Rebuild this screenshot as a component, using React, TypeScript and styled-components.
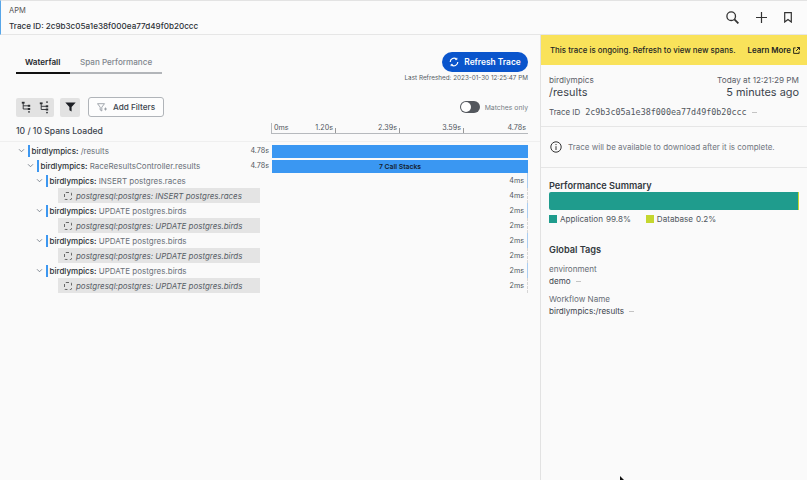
import React from 'react'
import styled, { createGlobalStyle } from 'styled-components'

const GlobalStyle = createGlobalStyle`
  html, body {
    margin: 0;
    padding: 0;
    background: #fafafa;
  }
  body {
    font-family: Inter, "Noto Sans", "Liberation Sans", sans-serif;
    color: #3c444d;
  }
`

type Span = { service: string; op: string; depth: number; time: string; db?: boolean }

const spans: Span[] = [
  { service: 'birdlympics:', op: 'INSERT postgres.races', depth: 2, time: '4ms' },
  { service: 'postgresql:postgres:', op: 'INSERT postgres.races', depth: 3, time: '4ms', db: true },
  { service: 'birdlympics:', op: 'UPDATE postgres.birds', depth: 2, time: '2ms' },
  { service: 'postgresql:postgres:', op: 'UPDATE postgres.birds', depth: 3, time: '2ms', db: true },
  { service: 'birdlympics:', op: 'UPDATE postgres.birds', depth: 2, time: '2ms' },
  { service: 'postgresql:postgres:', op: 'UPDATE postgres.birds', depth: 3, time: '2ms', db: true },
  { service: 'birdlympics:', op: 'UPDATE postgres.birds', depth: 2, time: '2ms' },
  { service: 'postgresql:postgres:', op: 'UPDATE postgres.birds', depth: 3, time: '2ms', db: true },
]

const Chevron = () => (
  <ChevronIcon viewBox="0 0 8 6">
    <path d="M1 1.5 L4 4.5 L7 1.5" fill="none" stroke="#6b7480" strokeWidth="1" />
  </ChevronIcon>
)

const SpanLabel = ({ depth, service, op }: { depth: number; service: string; op: string }) => (
  <LabelCell $depth={depth}>
    <Chevron />
    <BlueTick />
    <Name>
      <strong>{service}</strong> {op}
    </Name>
  </LabelCell>
)

const App = () => {
  return (
    <Page>
      <GlobalStyle />
      <Header>
        <HeaderText>
          <Crumb>APM</Crumb>
          <TraceTitle>Trace ID: 2c9b3c05a1e38f000ea77d49f0b20ccc</TraceTitle>
        </HeaderText>
        <HeaderIcons>
          <svg width="13" height="13" viewBox="0 0 13 13" fill="none" stroke="#333" strokeWidth="1.3">
            <circle cx="5.2" cy="5.2" r="4.3" />
            <path d="M8.4 8.4 L12.4 12.4" strokeWidth="1.8" />
          </svg>
          <svg width="11" height="11" viewBox="0 0 11 11" fill="none" stroke="#333" strokeWidth="1.2">
            <path d="M5.5 0 V11 M0 5.5 H11" />
          </svg>
          <svg width="8" height="11" viewBox="0 0 8 11" fill="none" stroke="#333" strokeWidth="1.2">
            <path d="M0.7 0.7 H7.3 V10 L4 7.5 L0.7 10 Z" />
          </svg>
        </HeaderIcons>
      </Header>

      <Main>
        <LeftPane>
          <TopRow>
            <Tabs>
              <Tab $active>Waterfall</Tab>
              <Tab>Span Performance</Tab>
            </Tabs>
            <RefreshBlock>
              <RefreshButton>
                <svg width="10" height="10" viewBox="0 0 10 10" fill="none" stroke="#fff" strokeWidth="1.2">
                  <path d="M1.2 5 A3.8 3.8 0 0 1 7.6 2.2 M8.8 5 A3.8 3.8 0 0 1 2.4 7.8" />
                  <path d="M7.9 0.8 V2.6 H6.2 M2.1 9.2 V7.4 H3.8" strokeWidth="0.9" />
                </svg>
                Refresh Trace
              </RefreshButton>
              <LastRefreshed>Last Refreshed: 2023-01-30 12:25:47 PM</LastRefreshed>
            </RefreshBlock>
          </TopRow>

          <Toolbar>
            <IconGroup>
              <svg width="10" height="12" viewBox="0 0 10 12" fill="none" stroke="#2a2d31" strokeWidth="0.9">
                <path d="M2.2 2 V8 H7 M2.2 4.8 H7" />
                <rect x="0.8" y="0.8" width="2.8" height="1.8" fill="#2a2d31" stroke="none" />
                <rect x="6.8" y="3.8" width="2.4" height="2" fill="#2a2d31" stroke="none" />
                <rect x="6.8" y="7" width="2.4" height="2" fill="#2a2d31" stroke="none" />
                <rect x="7.2" y="10.2" width="1.6" height="1.4" fill="#2a2d31" stroke="none" />
              </svg>
              <svg width="10" height="13" viewBox="0 0 10 13" fill="none" stroke="#2a2d31" strokeWidth="0.9">
                <path d="M2.2 2.5 V8.5 H7 M2.2 5.3 H7" />
                <rect x="7.2" y="0.4" width="1.6" height="1.4" fill="#2a2d31" stroke="none" />
                <rect x="0.8" y="1.4" width="2.8" height="1.8" fill="#2a2d31" stroke="none" />
                <rect x="6.8" y="4.3" width="2.4" height="2" fill="#2a2d31" stroke="none" />
                <rect x="6.8" y="7.5" width="2.4" height="2" fill="#2a2d31" stroke="none" />
                <rect x="7.2" y="10.9" width="1.6" height="1.4" fill="#2a2d31" stroke="none" />
              </svg>
            </IconGroup>
            <FilterIconBox>
              <svg width="11" height="10" viewBox="0 0 11 10">
                <path d="M0.3 0.5 H10.7 L6.6 5 V9.5 L4.4 8.2 V5 Z" fill="#1c1f24" />
              </svg>
            </FilterIconBox>
            <AddFilters>
              <svg width="11" height="9" viewBox="0 0 11 9" fill="none" stroke="#8b929b" strokeWidth="0.8">
                <path d="M0.5 0.7 H7.5 L4.8 4.2 V8 L3.2 7 V4.2 Z" />
                <path d="M8.5 4.5 V7.5 M7 6 H10" />
              </svg>
              Add Filters
            </AddFilters>
            <MatchesOnly>
              <Toggle />
              Matches only
            </MatchesOnly>
          </Toolbar>

          <ScaleRow>
            <Loaded>10 / 10 Spans Loaded</Loaded>
            <Scale>
              <ScaleCell>
                <span>0ms</span>
                <span>1.20s</span>
              </ScaleCell>
              <ScaleCell>
                <span />
                <span>2.39s</span>
              </ScaleCell>
              <ScaleCell>
                <span />
                <span>3.59s</span>
              </ScaleCell>
              <ScaleCell $last>
                <span />
                <span>4.78s</span>
              </ScaleCell>
            </Scale>
          </ScaleRow>

          <Rows>
            <Row>
              <LabelWithTime>
                <SpanLabel depth={0} service="birdlympics:" op="/results" />
                <Time>4.78s</Time>
              </LabelWithTime>
              <FullBar />
            </Row>
            <Row>
              <LabelWithTime>
                <SpanLabel depth={1} service="birdlympics:" op="RaceResultsController.results" />
                <Time>4.78s</Time>
              </LabelWithTime>
              <FullBar>7 Call Stacks</FullBar>
            </Row>
            {spans.map((s, i) => (
              <Row key={i}>
                {s.db ? (
                  <DbLabel>
                    <DbIcon />
                    <DbText>
                      {s.service} {s.op}
                    </DbText>
                  </DbLabel>
                ) : (
                  <LabelWithTime>
                    <SpanLabel depth={s.depth} service={s.service} op={s.op} />
                  </LabelWithTime>
                )}
                <Track $dashed={s.db}>
                  <TrackTime>{s.time}</TrackTime>
                </Track>
              </Row>
            ))}
          </Rows>
        </LeftPane>

        <RightPane>
          <Banner>
            <span>This trace is ongoing. Refresh to view new spans.</span>
            <LearnMore>
              Learn More
              <svg width="7" height="7" viewBox="0 0 8 8" fill="none" stroke="#111" strokeWidth="1">
                <path d="M3 1 H0.7 V7.3 H7 V5 M4.5 0.6 H7.4 V3.5 M7.4 0.6 L3.5 4.5" />
              </svg>
            </LearnMore>
          </Banner>

          <Summary>
            <SummaryRow>
              <span>birdlympics</span>
              <span>Today at 12:21:29 PM</span>
            </SummaryRow>
            <BigRow>
              <span>/results</span>
              <span>5 minutes ago</span>
            </BigRow>
            <TraceLine>
              Trace ID <Mono>2c9b3c05a1e38f000ea77d49f0b20ccc</Mono>
              <More />
            </TraceLine>
          </Summary>

          <InfoRow>
            <svg width="12" height="12" viewBox="0 0 12 12" fill="none" stroke="#333" strokeWidth="1">
              <circle cx="6" cy="6" r="5.2" />
              <path d="M6 5.2 V9 M6 3 V4.1" />
            </svg>
            Trace will be available to download after it is complete.
          </InfoRow>

          <Section>
            <SectionTitle>Performance Summary</SectionTitle>
            <PerfBar>
              <PerfApp />
              <PerfDb />
            </PerfBar>
            <Legend>
              <LegendItem>
                <Swatch $color="#1f9c8d" />
                Application<span>99.8%</span>
              </LegendItem>
              <LegendItem>
                <Swatch $color="#c5d72f" />
                Database<span>0.2%</span>
              </LegendItem>
            </Legend>

            <TagsTitle>Global Tags</TagsTitle>
            <Tag>
              <TagKey>environment</TagKey>
              <TagValue>
                demo
                <More />
              </TagValue>
            </Tag>
            <Tag>
              <TagKey>Workflow Name</TagKey>
              <TagValue>
                birdlympics:/results
                <More />
              </TagValue>
            </Tag>
          </Section>
        </RightPane>
      </Main>
      <Cursor viewBox="0 0 8 6">
        <path d="M0 0 L6 6 H0 Z" fill="#111" />
      </Cursor>
    </Page>
  )
}

export default App

const Page = styled.div`
  position: relative;
  width: 807px;
  height: 480px;
  overflow: hidden;
  display: flex;
  flex-direction: column;
  background: #fafafa;
`
const Header = styled.header`
  box-sizing: border-box;
  height: 35px;
  display: flex;
  justify-content: space-between;
  align-items: center;
  background: #fbfbfb;
  border-top: 1px solid #e3e3e3;
  border-left: 1px solid #58a6e8;
  border-bottom: 1px solid #e6e6e6;
  padding: 0 15px 0 8px;
`
const HeaderText = styled.div`
  display: flex;
  flex-direction: column;
  gap: 6px;
  margin-top: 2px;
`
const Crumb = styled.div`
  font-size: 7.5px;
  line-height: 9px;
  color: #555;
`
const TraceTitle = styled.div`
  font-size: 8.1px;
  line-height: 11px;
  color: #2b3036;
  font-weight: 500;
`
const HeaderIcons = styled.div`
  display: flex;
  align-items: center;
  gap: 17px;
`
const Main = styled.div`
  flex: 1;
  display: flex;
  min-height: 0;
`
const LeftPane = styled.section`
  width: 540px;
  box-sizing: border-box;
  padding-top: 17px;
  display: flex;
  flex-direction: column;
`
const TopRow = styled.div`
  display: flex;
  justify-content: space-between;
  align-items: flex-start;
  padding: 0 12px 0 16px;
`
const Tabs = styled.div`
  display: flex;
  margin-top: 2px;
`
const Tab = styled.div<{ $active?: boolean }>`
  box-sizing: border-box;
  height: 20px;
  padding: 1px 9px 0 ${p => (p.$active ? '9px' : '10px')};
  line-height: 14px;
  font-size: 8.1px;
  font-weight: ${p => (p.$active ? 600 : 500)};
  color: ${p => (p.$active ? '#22262b' : '#80868d')};
  border-bottom: 2px solid ${p => (p.$active ? '#111' : '#b2b5b9')};
  width: ${p => (p.$active ? '54px' : '92px')};
  white-space: nowrap;
`
const RefreshBlock = styled.div`
  display: flex;
  flex-direction: column;
  align-items: flex-end;
  gap: 2px;
`
const RefreshButton = styled.button`
  width: 86px;
  height: 20px;
  border: none;
  border-radius: 10px;
  background: #0a55cc;
  color: #fff;
  font-family: inherit;
  font-size: 8.4px;
  font-weight: 600;
  display: flex;
  align-items: center;
  justify-content: center;
  gap: 5px;
  padding: 0;
`
const LastRefreshed = styled.div`
  font-size: 6.35px;
  line-height: 9px;
  color: #555c64;
  white-space: nowrap;
`
const Toolbar = styled.div`
  display: flex;
  align-items: center;
  height: 20px;
  margin-top: 14px;
  padding: 0 12px 0 16px;
`
const IconGroup = styled.div`
  width: 38px;
  height: 19px;
  background: #e2e2e2;
  border-radius: 2px;
  display: flex;
  align-items: center;
  justify-content: space-around;
  padding: 0 1px;
  box-sizing: border-box;
`
const FilterIconBox = styled.div`
  width: 20px;
  height: 19px;
  margin-left: 6px;
  background: #e2e2e2;
  border-radius: 2px;
  display: flex;
  align-items: center;
  justify-content: center;
`
const AddFilters = styled.button`
  width: 76px;
  height: 20px;
  margin-left: 8px;
  box-sizing: border-box;
  border: 1px solid #b0b4b9;
  border-radius: 3px;
  background: #fdfdfd;
  font-family: inherit;
  font-size: 8.2px;
  font-weight: 500;
  color: #3c444d;
  display: flex;
  align-items: center;
  justify-content: center;
  gap: 5px;
  padding: 0;
`
const MatchesOnly = styled.div`
  margin-left: auto;
  display: flex;
  align-items: center;
  gap: 5px;
  font-size: 6.85px;
  color: #777e86;
`
const Toggle = styled.div`
  position: relative;
  width: 20px;
  height: 12px;
  border-radius: 6px;
  background: #54585e;
  &::before {
    content: '';
    position: absolute;
    left: 1px;
    top: 1px;
    width: 10px;
    height: 10px;
    border-radius: 50%;
    background: #fff;
  }
`
const ScaleRow = styled.div`
  display: flex;
  align-items: flex-end;
  height: 17px;
`
const Loaded = styled.div`
  width: 256px;
  padding-left: 16px;
  margin-bottom: -3px;
  font-size: 8.6px;
  font-weight: 500;
  line-height: 11px;
  color: #3c444d;
`
const Scale = styled.div`
  display: grid;
  grid-template-columns: repeat(4, 64px);
  border-bottom: 1px solid #b6b9bd;
  border-left: 1px solid #b6b9bd;
  margin-left: -1px;
`
const ScaleCell = styled.div<{ $last?: boolean }>`
  display: flex;
  justify-content: space-between;
  box-sizing: border-box;
  padding: 0 ${p => (p.$last ? '2px' : '3px')} 0 2px;
  font-size: 7.2px;
  line-height: 10px;
  color: #50565d;
  background: ${p => (p.$last ? 'none' : 'linear-gradient(#999, #999) no-repeat 100% 100% / 1px 5px')};
`
const Rows = styled.div`
  margin-top: 7px;
  padding-top: 1px;
  border-top: 1px solid #efefef;
  display: flex;
  flex-direction: column;
`
const Row = styled.div`
  display: flex;
  height: 15px;
`
const LabelWithTime = styled.div`
  width: 269px;
  margin-right: 3px;
  display: flex;
  align-items: center;
  justify-content: space-between;
  min-width: 0;
`
const LabelCell = styled.div<{ $depth: number }>`
  display: flex;
  align-items: center;
  padding-left: ${p => 18 + p.$depth * 9}px;
`
const ChevronIcon = styled.svg`
  width: 7px;
  height: 5px;
  flex: none;
`
const BlueTick = styled.div`
  width: 1.5px;
  height: 12px;
  margin-left: 3px;
  background: #3d97f0;
  flex: none;
`
const Name = styled.div`
  margin-left: 2px;
  font-size: 8px;
  color: #6a7179;
  white-space: nowrap;
  strong {
    font-weight: 500;
    color: #2b3036;
  }
`
const Time = styled.div`
  font-size: 7.2px;
  color: #50565d;
`
const FullBar = styled.div`
  width: 256px;
  height: 13px;
  margin-top: 2px;
  background: #3a97f2;
  color: #14202c;
  font-size: 6.8px;
  font-weight: 600;
  display: flex;
  align-items: center;
  justify-content: center;
`
const DbLabel = styled.div`
  width: 202px;
  margin: 0 12px 0 58px;
  background: #e4e4e4;
  display: flex;
  align-items: center;
  padding-left: 6px;
  box-sizing: border-box;
`
const DbIcon = styled.div`
  width: 6px;
  height: 6px;
  border: 1px dashed #666;
  border-radius: 2px;
  flex: none;
`
const DbText = styled.div`
  margin-left: 4px;
  font-size: 7.95px;
  font-style: italic;
  color: #575e66;
  white-space: nowrap;
`
const Track = styled.div<{ $dashed?: boolean }>`
  width: 256px;
  box-sizing: border-box;
  display: flex;
  align-items: center;
  justify-content: flex-end;
  padding-right: 3px;
  border-right: 1px ${p => (p.$dashed ? 'dashed #d6d6d6' : 'solid #a9cdf2')};
`
const TrackTime = styled.span`
  font-size: 7.2px;
  color: #50565d;
`
const RightPane = styled.aside`
  flex: 1;
  box-sizing: border-box;
  border-left: 1px solid #e2e2e2;
  display: flex;
  flex-direction: column;
`
const Banner = styled.div`
  height: 30px;
  background: #f9e25a;
  display: flex;
  align-items: center;
  justify-content: space-between;
  padding: 0 7px 0 9px;
  font-size: 7.85px;
  font-weight: 500;
  color: #1c1f24;
  white-space: nowrap;
`
const LearnMore = styled.span`
  display: flex;
  align-items: center;
  gap: 2px;
  font-weight: 600;
  font-size: 7.9px;
`
const Summary = styled.div`
  height: 51px;
  padding: 10px 8px 0;
  border-bottom: 1px solid #e6e6e6;
`
const SummaryRow = styled.div`
  display: flex;
  justify-content: space-between;
  font-size: 8.2px;
  line-height: 10px;
  color: #5a6068;
`
const BigRow = styled.div`
  display: flex;
  justify-content: space-between;
  font-size: 10.9px;
  line-height: 15px;
  color: #3c444d;
`
const TraceLine = styled.div`
  display: flex;
  align-items: center;
  margin-top: 7px;
  font-size: 7.9px;
  line-height: 11px;
  color: #50565d;
`
const Mono = styled.span`
  margin-left: 5px;
  font-family: "DejaVu Sans Mono", "Liberation Mono", monospace;
  font-size: 8.4px;
  color: #50565d;
`
const More = styled.span`
  display: inline-block;
  width: 5px;
  height: 1px;
  margin-left: 5px;
  background: #c4c4c4;
`
const InfoRow = styled.div`
  height: 41px;
  box-sizing: border-box;
  display: flex;
  align-items: center;
  gap: 6px;
  padding: 0 9px;
  font-size: 8px;
  color: #70767e;
  border-bottom: 1px solid #e6e6e6;
  white-space: nowrap;
`
const Section = styled.div`
  padding: 12px 8px 0;
`
const SectionTitle = styled.div`
  font-size: 9.2px;
  line-height: 12px;
  font-weight: 600;
  color: #33393f;
`
const PerfBar = styled.div`
  display: flex;
  height: 18px;
`
const PerfApp = styled.div`
  flex: 1;
  background: #1f9c8d;
  border-radius: 2px 0 0 2px;
`
const PerfDb = styled.div`
  width: 1px;
  background: #c5d72f;
`
const Legend = styled.div`
  display: flex;
  gap: 15px;
  margin-top: 4px;
`
const LegendItem = styled.div`
  display: flex;
  align-items: center;
  font-size: 8.1px;
  line-height: 10px;
  color: #50565d;
  span {
    margin-left: 3px;
  }
`
const Swatch = styled.i<{ $color: string }>`
  width: 8px;
  height: 8px;
  margin-right: 3px;
  background: ${p => p.$color};
`
const TagsTitle = styled(SectionTitle)`
  margin-top: 20px;
`
const Tag = styled.div`
  margin-top: 7px;
  & + & {
    margin-top: 6px;
  }
`
const TagKey = styled.div`
  font-size: 8.1px;
  line-height: 12px;
  color: #676d75;
`
const TagValue = styled.div`
  display: flex;
  align-items: center;
  font-size: 8.1px;
  line-height: 12px;
  color: #3c444d;
`
const Cursor = styled.svg`
  position: absolute;
  left: 620px;
  top: 476px;
  width: 8px;
  height: 6px;
`
